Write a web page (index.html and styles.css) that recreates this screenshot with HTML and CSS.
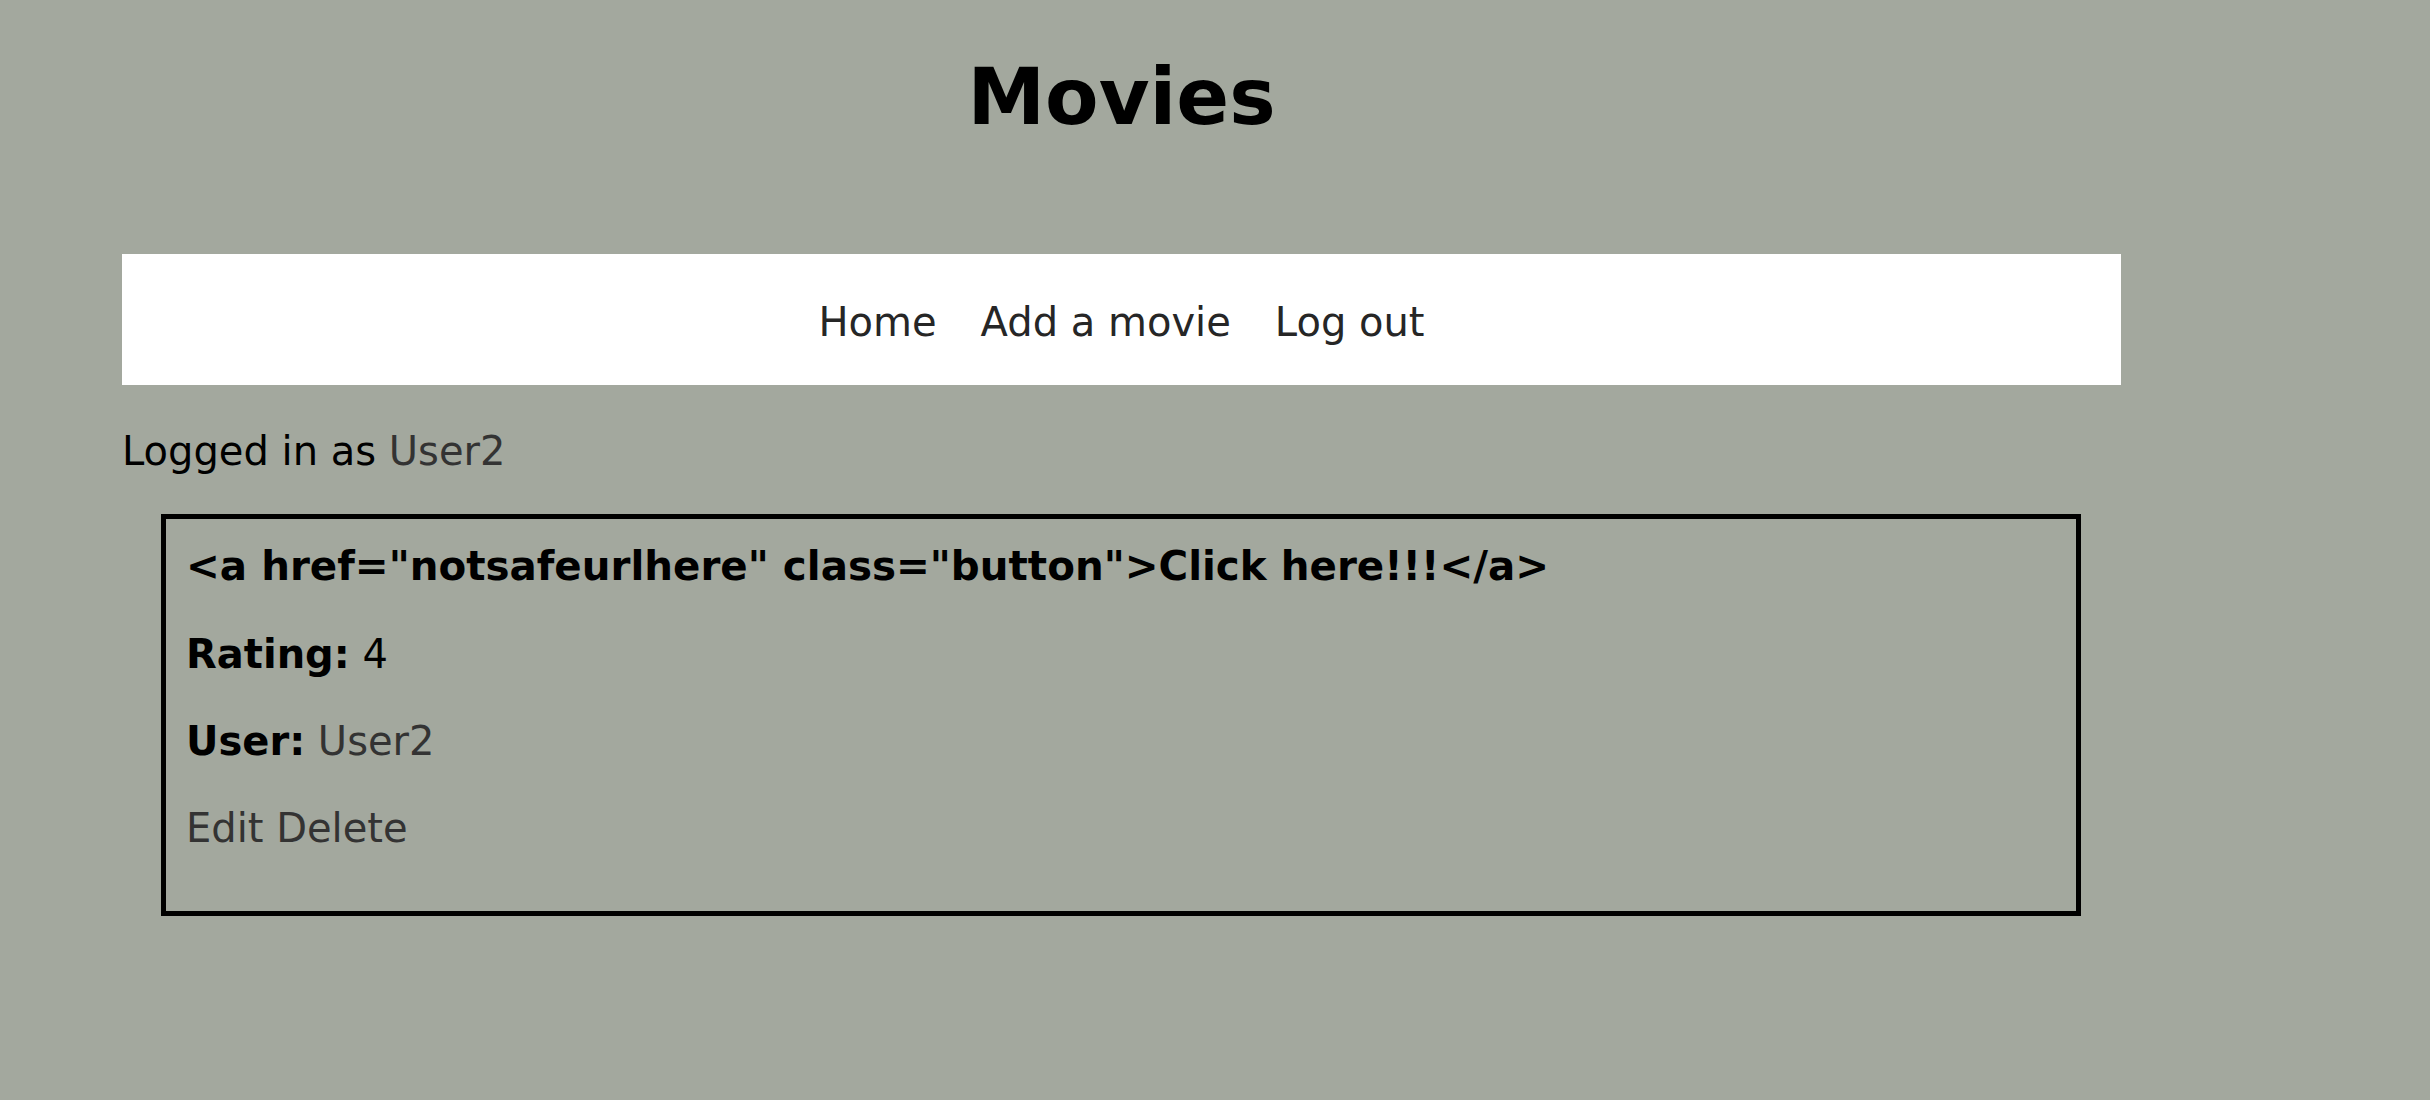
FILE: index.html
```html
<!DOCTYPE html>
<html>
<head>
<meta charset="utf-8">
<title>Movies</title>
<link rel="stylesheet" href="styles.css">
</head>
<body>
<div class="page">
  <h1 class="title">Movies</h1>
  <nav class="nav">
    <a class="nav-link" href="#">Home</a>
    <a class="nav-link" href="#">Add a movie</a>
    <a class="nav-link" href="#">Log out</a>
  </nav>
  <p class="login">Logged in as <a class="link" href="#">User2</a></p>
  <div class="card">
    <h3 class="card-title">&lt;a href="notsafeurlhere" class="button"&gt;Click here!!!&lt;/a&gt;</h3>
    <p class="row"><strong>Rating:</strong> 4</p>
    <p class="row"><strong>User:</strong> <a class="link" href="#">User2</a></p>
    <p class="row"><a class="link" href="#">Edit</a> <a class="link" href="#">Delete</a></p>
  </div>
</div>
</body>
</html>
```

FILE: styles.css
```css
html, body {
  margin: 0;
  padding: 0;
}
body {
  background: #a3a89e;
  font-family: "DejaVu Sans", Verdana, sans-serif;
  font-size: 40px;
  line-height: 47px;
  color: #000;
}
.page {
  margin-left: 122px;
  width: 1999px;
  padding-top: 52px;
}
.title {
  margin: 0 0 111px 0;
  font-size: 78px;
  line-height: 91px;
  font-weight: bold;
  text-align: center;
}
.nav {
  background: #fff;
  height: 131px;
  box-sizing: border-box;
  padding-top: 45px;
  display: flex;
  justify-content: center;
  align-items: flex-start;
  gap: 44px;
}
.nav-link {
  color: #262626;
  text-decoration: none;
}
.link {
  color: #333;
  text-decoration: none;
}
.login {
  margin: 43px 0 39px 0;
}
.card {
  margin: 0 40px 0 39px;
  border: 5px solid #000;
  padding: 23.5px 20px 19.5px 20px;
}
.card-title {
  margin: 0 0 41px 0;
  font-size: 40.4px;
  line-height: 47px;
  font-weight: bold;
}
.row {
  margin: 40px 0;
}
```
